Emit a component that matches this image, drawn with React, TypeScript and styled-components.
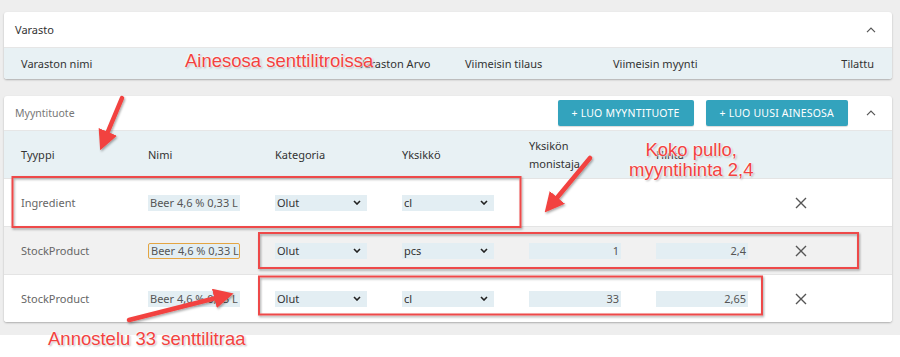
import styled, { createGlobalStyle } from "styled-components";

const Global = createGlobalStyle`
  body {
    margin: 0;
    background: #fff;
    font-family: "Noto Sans", "DejaVu Sans", sans-serif;
  }
`;

type Row = {
  type: string;
  name: string;
  unit: string;
  multiplier?: string;
  price?: string;
  hover?: boolean;
  focused?: boolean;
};

const rows: Row[] = [
  { type: "Ingredient", name: "Beer 4,6 % 0,33 L", unit: "cl" },
  { type: "StockProduct", name: "Beer 4,6 % 0,33 L P", unit: "pcs", multiplier: "1", price: "2,4", hover: true, focused: true },
  { type: "StockProduct", name: "Beer 4,6 % 0,33 L", unit: "cl", multiplier: "33", price: "2,65" },
];

function ChevronUp() {
  return (
    <svg width="10" height="6" viewBox="0 0 10 6">
      <path d="M1 5.2 L5 1.2 L9 5.2" fill="none" stroke="#555" strokeWidth="1.2" />
    </svg>
  );
}

function ChevronDown() {
  return (
    <svg width="8" height="5" viewBox="0 0 8 5">
      <path d="M1 1 L4 4 L7 1" fill="none" stroke="#222" strokeWidth="1.6" />
    </svg>
  );
}

function Cross() {
  return (
    <svg width="12" height="12" viewBox="0 0 12 12">
      <path d="M1 1 L11 11 M11 1 L1 11" stroke="#555" strokeWidth="1.4" />
    </svg>
  );
}

export default function App() {
  return (
    <Wrap>
      <Global />
      <Page>
        <Card>
          <CardHeader $h={36}>
            <Title>Varasto</Title>
            <ChevronUp />
          </CardHeader>
          <StockHead>
            <span>Varaston nimi</span>
            <span>Varaston Arvo</span>
            <span>Viimeisin tilaus</span>
            <span>Viimeisin myynti</span>
            <End>Tilattu</End>
          </StockHead>
        </Card>

        <Card>
          <CardHeader $h={35}>
            <Title $muted>Myyntituote</Title>
            <Actions>
              <Button>+ LUO MYYNTITUOTE</Button>
              <Button>+ LUO UUSI AINESOSA</Button>
              <ChevronUp />
            </Actions>
          </CardHeader>
          <TableHead>
            <span>Tyyppi</span>
            <span>Nimi</span>
            <span>Kategoria</span>
            <span>Yksikkö</span>
            <span>
              Yksikön
              <br />
              monistaja
            </span>
            <span>Hinta</span>
          </TableHead>
          {rows.map((r, i) => (
            <TableRow key={i} $hover={r.hover}>
              <Cell>{r.type}</Cell>
              <Field $focused={r.focused}>{r.name}</Field>
              <Select>
                Olut
                <ChevronDown />
              </Select>
              <Select>
                {r.unit}
                <ChevronDown />
              </Select>
              {r.multiplier ? <Field $num>{r.multiplier}</Field> : <span />}
              {r.price ? <Field $num>{r.price}</Field> : <span />}
              <Remove>
                <Cross />
              </Remove>
            </TableRow>
          ))}
        </Card>
      </Page>

      <Overlay width="900" height="357" viewBox="0 0 900 357">
        <defs>
          <filter id="sh" x="-20%" y="-20%" width="140%" height="140%">
            <feDropShadow dx="1" dy="1.5" stdDeviation="1.2" floodColor="#000" floodOpacity="0.35" />
          </filter>
          <marker id="head" viewBox="0 0 10 10" refX="5" refY="5" markerWidth="4.4" markerHeight="4.4" orient="auto">
            <path d="M0 0 L10 5 L0 10 z" fill="#f2423f" />
          </marker>
        </defs>
        <g filter="url(#sh)" fill="none" stroke="#ee4a4a" strokeWidth="2">
          <rect x="12.5" y="177" width="508" height="50" />
          <rect x="259" y="233" width="599" height="35" />
          <rect x="259" y="276.5" width="503" height="38" />
        </g>
        <g filter="url(#sh)" stroke="#f2423f" strokeWidth="4.5" strokeLinecap="round" markerEnd="url(#head)">
          <line x1="122" y1="98" x2="104" y2="141" />
          <line x1="590" y1="158" x2="551" y2="205" />
          <line x1="129" y1="320" x2="224" y2="296" />
        </g>
      </Overlay>
      <Note style={{ left: 185, top: 51 }}>Ainesosa senttilitroissa</Note>
      <Note style={{ left: 629, top: 140 }} $center>
        Koko pullo,
        <br />
        myyntihinta 2,4
      </Note>
      <Note style={{ left: 48, top: 329 }}>Annostelu 33 senttilitraa</Note>
    </Wrap>
  );
}

const Wrap = styled.div`
  position: relative;
  width: 900px;
  height: 357px;
  overflow: hidden;
`;

const Page = styled.div`
  background: #eeeeee;
  height: 335px;
  box-sizing: border-box;
  padding: 12px 8px 0 4px;
  display: flex;
  flex-direction: column;
  gap: 17px;
`;

const Card = styled.section`
  background: #fff;
  border-radius: 3px;
  box-shadow: 0 1px 2px rgba(0, 0, 0, 0.28);
  overflow: hidden;
  font-size: 11px;
  color: #333;
`;

const CardHeader = styled.div<{ $h: number }>`
  height: ${(p) => p.$h}px;
  box-sizing: border-box;
  border-bottom: 1px solid #e6e6e6;
  display: flex;
  align-items: center;
  justify-content: space-between;
  padding: 0 16px 0 11px;
`;

const Title = styled.div<{ $muted?: boolean }>`
  font-size: ${(p) => (p.$muted ? "10.5px" : "11px")};
  color: ${(p) => (p.$muted ? "#777" : "#333")};
`;

const Actions = styled.div`
  display: flex;
  align-items: center;
  gap: 12px;
  & > svg {
    margin-left: 6px;
  }
`;

const Button = styled.button`
  height: 26px;
  padding: 0 14px;
  border: none;
  border-radius: 2px;
  background: #33a3bd;
  color: #fff;
  font-family: inherit;
  font-size: 10.5px;
  letter-spacing: 0.2px;
  box-shadow: 0 1px 1px rgba(0, 0, 0, 0.15);
`;

const StockHead = styled.div`
  height: 31px;
  background: #e8f1f4;
  display: grid;
  grid-template-columns: 337px 107px 148px 1fr auto;
  align-items: center;
  padding: 0 18px 0 17px;
  color: #333;
`;

const End = styled.span`
  text-align: right;
`;

const TableHead = styled.div`
  height: 47px;
  background: #e8f1f4;
  display: grid;
  grid-template-columns: repeat(6, 127px) 1fr;
  align-items: center;
  padding-left: 17px;
  color: #333;
  line-height: 18px;
`;

const TableRow = styled.div<{ $hover?: boolean }>`
  height: 48px;
  box-sizing: border-box;
  border-top: 1px solid #e4e4e4;
  background: ${(p) => (p.$hover ? "#f1f1f1" : "#fff")};
  display: grid;
  grid-template-columns: repeat(6, 127px) 1fr;
  align-items: center;
  padding-left: 17px;
  color: #666;
`;

const Cell = styled.span`
  color: #666;
`;

const Field = styled.div<{ $focused?: boolean; $num?: boolean }>`
  width: 92px;
  height: 16px;
  box-sizing: border-box;
  background: #e3eef3;
  color: #555;
  padding: 0 2px;
  line-height: ${(p) => (p.$focused ? "14px" : "16px")};
  border: ${(p) => (p.$focused ? "1px solid #e4a542" : "none")};
  border-radius: ${(p) => (p.$focused ? "2px" : "0")};
  text-align: ${(p) => (p.$num ? "right" : "left")};
  white-space: nowrap;
  overflow: hidden;
`;

const Select = styled.div`
  width: 92px;
  height: 16px;
  background: #e3eef3;
  color: #333;
  display: flex;
  align-items: center;
  justify-content: space-between;
  padding: 0 6px 0 2px;
  box-sizing: border-box;
`;

const Remove = styled.div`
  display: flex;
  padding-left: 12px;
`;

const Overlay = styled.svg`
  position: absolute;
  left: 0;
  top: 0;
  pointer-events: none;
`;

const Note = styled.div<{ $center?: boolean }>`
  position: absolute;
  font-family: "Liberation Sans", Arial, sans-serif;
  font-size: 18.5px;
  line-height: 20px;
  color: #f2423f;
  white-space: nowrap;
  text-align: ${(p) => (p.$center ? "center" : "left")};
  text-shadow: 0 0 2px #fff, 0 0 2px #fff, 0 0 3px #fff, 1px 1px 2px rgba(0, 0, 0, 0.4);
`;
